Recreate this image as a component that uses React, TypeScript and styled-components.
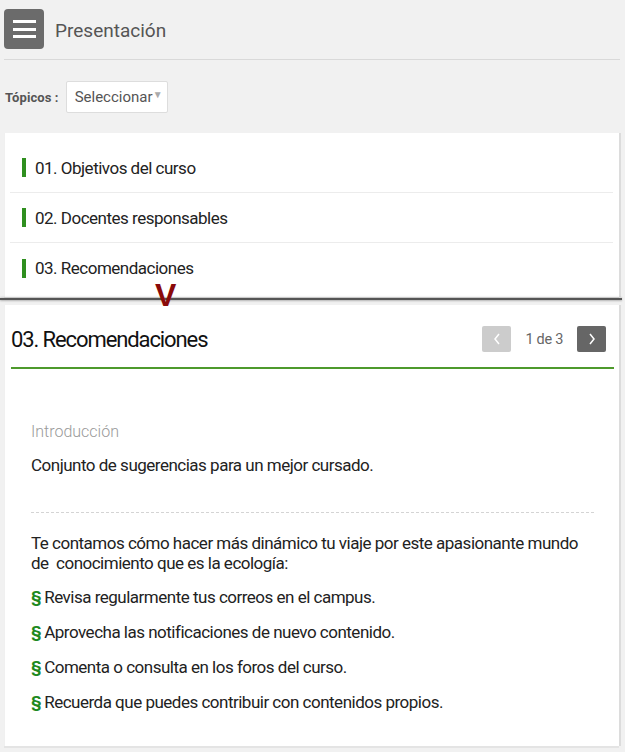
import React from "react";
import styled, { createGlobalStyle } from "styled-components";

const Global = createGlobalStyle`
  html, body { margin: 0; padding: 0; background: #f1f1f1; }
  body { font-family: Roboto, "Liberation Sans", sans-serif; color: #222; }
  * { box-sizing: border-box; }
`;

const Page = styled.div`
  width: 625px;
  min-height: 752px;
  background: #f1f1f1;
  display: flex;
  flex-direction: column;
`;

const Header = styled.header`
  display: flex;
  align-items: center;
  gap: 11px;
  margin: 0 5px 0 4px;
  padding: 9px 0 10px;
  border-bottom: 1px solid #d9d9d9;
`;

const MenuButton = styled.button`
  width: 40px;
  height: 40px;
  border: none;
  border-radius: 4px;
  background: #6b6b6b;
  display: flex;
  flex-direction: column;
  justify-content: center;
  align-items: center;
  gap: 4.5px;
  padding: 0;
`;

const MenuBar = styled.span`
  display: block;
  width: 23px;
  height: 3px;
  background: #fff;
`;

const Title = styled.h1`
  margin: 2px 0 0;
  font-size: 19px;
  font-weight: 400;
  color: #555;
  letter-spacing: 0;
`;

const FilterRow = styled.div`
  display: flex;
  align-items: center;
  gap: 7px;
  padding: 21px 5px 20px;
`;

const FilterLabel = styled.label`
  font-size: 13px;
  font-weight: 700;
  color: #555;
  letter-spacing: 0.1px;
`;

const Select = styled.div`
  width: 102px;
  height: 32px;
  background: #fff;
  border: 1px solid #ddd;
  border-radius: 2px;
  display: flex;
  align-items: center;
  justify-content: space-between;
  padding: 0 4px 0 8px;
  font-size: 15px;
  color: #555;
`;

const Caret = styled.span`
  font-size: 10px;
  color: #aaa;
  margin-top: -6px;
`;

const Card = styled.section`
  background: #fff;
  margin: 0 6px 0 4px;
  box-shadow: 2px 0 0 #dcdcdc, 0 2px 0 #e4e4e4;
  border-left: 1px solid #f0f0f0;
`;

const TopicList = styled.ul`
  list-style: none;
  margin: 0;
  padding: 10px 6px 4px 5px;
`;

const TopicItem = styled.li<{ $last?: boolean }>`
  display: flex;
  align-items: center;
  gap: 9px;
  height: 50px;
  padding-left: 12px;
  border-bottom: ${(p) => (p.$last ? "none" : "1px solid #ececec")};
  font-size: 17px;
  color: #222;
  letter-spacing: -0.5px;
`;

const GreenMark = styled.span`
  display: block;
  width: 4px;
  height: 19px;
  background: #2f8f1f;
`;

const DividerWrap = styled.div`
  position: relative;
  height: 8px;
  padding-top: 1px;
`;

const DarkRule = styled.div`
  height: 2px;
  margin-right: 3px;
  background: #555;
  box-shadow: 0 1px 2px rgba(0, 0, 0, 0.25), 0 -1px 2px rgba(0, 0, 0, 0.15);
`;

const Marker = styled.span`
  position: absolute;
  left: 155px;
  top: -18px;
  font-size: 32px;
  font-weight: 700;
  color: #8a0a0a;
  line-height: 1;
  font-family: "Liberation Sans", Arial, sans-serif;
`;

const ContentCard = styled(Card)`
  padding: 0 5px 34px 6px;
  margin-bottom: 6px;
`;

const ContentHeader = styled.div`
  display: flex;
  align-items: center;
  justify-content: space-between;
  height: 64px;
  border-bottom: 2px solid #4e9a2c;
  padding-top: 6px;
`;

const ContentTitle = styled.h2`
  margin: 0;
  font-size: 22px;
  font-weight: 400;
  color: #111;
  letter-spacing: -1.1px;
`;

const Pager = styled.div`
  display: flex;
  align-items: center;
  gap: 14px;
  padding-right: 8px;
`;

const PageButton = styled.button<{ $disabled?: boolean }>`
  width: 29px;
  height: 26px;
  border: none;
  border-radius: 2px;
  padding: 0;
  background: ${(p) => (p.$disabled ? "#cccccc" : "#666666")};
  display: flex;
  align-items: center;
  justify-content: center;
`;

const PageInfo = styled.span`
  font-size: 14.5px;
  color: #666;
  letter-spacing: -0.3px;
`;

const Body = styled.div`
  padding: 53px 20px 0 20px;
`;

const Subtitle = styled.h3`
  margin: 0;
  font-size: 16px;
  font-weight: 300;
  color: #9a9a9a;
`;

const Paragraph = styled.p<{ $first?: boolean }>`
  margin: ${(p) => (p.$first ? "0" : "14px 0 0")};
  font-size: 17px;
  line-height: 20px;
  color: #222;
  letter-spacing: -0.5px;
`;

const Dotted = styled.hr`
  border: none;
  border-top: 1px dashed #d4d4d4;
  margin: 37px 0 20px;
`;

const Bullets = styled.ul`
  list-style: none;
  margin: 14px 0 0;
  padding: 0;
  display: flex;
  flex-direction: column;
  gap: 15px;
`;

const Bullet = styled.li`
  font-size: 17px;
  line-height: 20px;
  color: #222;
  letter-spacing: -0.5px;
`;

const Section = styled.span`
  color: #1f8a1f;
  font-weight: 700;
  margin-right: 3px;
`;

const Chevron = ({ dir }: { dir: "left" | "right" }) => (
  <svg width="10" height="14" viewBox="0 0 10 14">
    <path
      d={dir === "left" ? "M7 2 L3 7 L7 12" : "M3 2 L7 7 L3 12"}
      fill="none"
      stroke="#fff"
      strokeWidth="1.5"
    />
  </svg>
);

const topics = [
  "01. Objetivos del curso",
  "02. Docentes responsables",
  "03. Recomendaciones",
];

const tips = [
  "Revisa regularmente tus correos en el campus.",
  "Aprovecha las notificaciones de nuevo contenido.",
  "Comenta o consulta en los foros del curso.",
  "Recuerda que puedes contribuir con contenidos propios.",
];

export default function App() {
  return (
    <Page>
      <Global />
      <Header>
        <MenuButton aria-label="menu">
          <MenuBar />
          <MenuBar />
          <MenuBar />
        </MenuButton>
        <Title>Presentación</Title>
      </Header>
      <FilterRow>
        <FilterLabel>Tópicos :</FilterLabel>
        <Select>
          Seleccionar <Caret>▼</Caret>
        </Select>
      </FilterRow>
      <Card>
        <TopicList>
          {topics.map((t, i) => (
            <TopicItem key={t} $last={i === topics.length - 1}>
              <GreenMark />
              {t}
            </TopicItem>
          ))}
        </TopicList>
      </Card>
      <DividerWrap>
        <DarkRule />
        <Marker>V</Marker>
      </DividerWrap>
      <ContentCard>
        <ContentHeader>
          <ContentTitle>03. Recomendaciones</ContentTitle>
          <Pager>
            <PageButton $disabled aria-label="anterior">
              <Chevron dir="left" />
            </PageButton>
            <PageInfo>1 de 3</PageInfo>
            <PageButton aria-label="siguiente">
              <Chevron dir="right" />
            </PageButton>
          </Pager>
        </ContentHeader>
        <Body>
          <Subtitle>Introducción</Subtitle>
          <Paragraph>Conjunto de sugerencias para un mejor cursado.</Paragraph>
          <Dotted />
          <Paragraph $first>
            Te contamos cómo hacer más dinámico tu viaje por este apasionante
            mundo de&nbsp; conocimiento que es la ecología:
          </Paragraph>
          <Bullets>
            {tips.map((t) => (
              <Bullet key={t}>
                <Section>§</Section>
                {t}
              </Bullet>
            ))}
          </Bullets>
        </Body>
      </ContentCard>
    </Page>
  );
}
